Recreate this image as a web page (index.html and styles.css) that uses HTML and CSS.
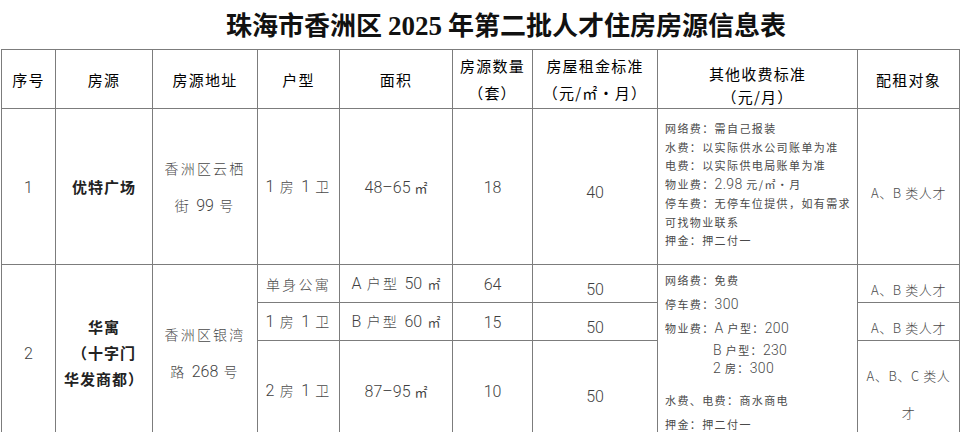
FILE: index.html
```html
<!DOCTYPE html>
<html lang="zh-CN">
<head>
<meta charset="utf-8">
<title>珠海市香洲区 2025 年第二批人才住房房源信息表</title>
<link rel="stylesheet" href="styles.css">
</head>
<body>
<div class="page">
  <h1 class="title">珠海市香洲区 <span class="num">2025</span> 年第二批人才住房房源信息表</h1>
  <table class="sheet">
    <colgroup>
      <col class="c1"><col class="c2"><col class="c3"><col class="c4"><col class="c5">
      <col class="c6"><col class="c7"><col class="c8"><col class="c9">
    </colgroup>
    <thead>
      <tr class="r-head">
        <th>序号</th>
        <th>房源</th>
        <th>房源地址</th>
        <th>户型</th>
        <th>面积</th>
        <th class="two">房源数量<br>（套）</th>
        <th class="two">房屋租金标准<br>（元/㎡・月）</th>
        <th class="two low-h">其他收费标准<br>（元/月）</th>
        <th>配租对象</th>
      </tr>
    </thead>
    <tbody>
      <tr class="r1">
        <td class="num">1</td>
        <td class="name">优特广场</td>
        <td class="addr">香洲区云栖<br>街 <span class="num">99</span> 号</td>
        <td><span class="num">1</span> 房 <span class="num">1</span> 卫</td>
        <td class="num">48–65 <span class="sq">㎡</span></td>
        <td class="num">18</td>
        <td class="num low">40</td>
        <td class="fees fees1">
          <div>网络费：需自己报装</div>
          <div>水费：以实际供水公司账单为准</div>
          <div>电费：以实际供电局账单为准</div>
          <div>物业费：<span class="fnum">2.98</span> 元/㎡・月</div>
          <div>停车费：无停车位提供，如有需求</div>
          <div>可找物业联系</div>
          <div>押金：押二付一</div>
        </td>
        <td class="target low">A、B 类人才</td>
      </tr>
      <tr class="r2a">
        <td class="num" rowspan="3">2</td>
        <td class="name name2" rowspan="3">华寓<br>（十字门<br>华发商都）</td>
        <td class="addr" rowspan="3">香洲区银湾<br>路 <span class="num">268</span> 号</td>
        <td>单身公寓</td>
        <td><span class="num">A</span> 户型 <span class="num">50</span> <span class="sq">㎡</span></td>
        <td class="num">64</td>
        <td class="num low">50</td>
        <td class="fees fees2" rowspan="3">
          <div class="fl">网络费：免费</div>
          <div class="fl">停车费：<span class="fnum">300</span></div>
          <div class="fl">物业费：<span class="fnum">A</span> 户型：<span class="fnum">200</span></div>
          <div class="fl ind l4"><span class="fnum">B</span> 户型：<span class="fnum">230</span></div>
          <div class="fl ind l5"><span class="fnum">2</span> 房：<span class="fnum">300</span></div>
          <div class="fl l6">水费、电费：商水商电</div>
          <div class="fl">押金：押二付一</div>
        </td>
        <td class="target low">A、B 类人才</td>
      </tr>
      <tr class="r2b">
        <td><span class="num">1</span> 房 <span class="num">1</span> 卫</td>
        <td><span class="num">B</span> 户型 <span class="num">60</span> <span class="sq">㎡</span></td>
        <td class="num">15</td>
        <td class="num low">50</td>
        <td class="target low">A、B 类人才</td>
      </tr>
      <tr class="r2c">
        <td><span class="num">2</span> 房 <span class="num">1</span> 卫</td>
        <td class="num">87–95 <span class="sq">㎡</span></td>
        <td class="num">10</td>
        <td class="num low">50</td>
        <td class="target target3">A、B、C 类人<br>才</td>
      </tr>
    </tbody>
  </table>
</div>
</body>
</html>
```
FILE: styles.css
```css
html, body {
  margin: 0;
  padding: 0;
  background: #ffffff;
  overflow: hidden;
}

.page {
  width: 960px;
  font-family: "Noto Sans CJK SC", sans-serif;
}

.title {
  margin: 0;
  height: 49px;
  line-height: 48px;
  padding-left: 52px;
  text-align: center;
  font-size: 26px;
  font-weight: 700;
  color: #111;
  font-family: "Noto Sans CJK SC", sans-serif;
  white-space: nowrap;
}

.title .num {
  font-family: "Liberation Serif", serif;
  font-size: 27px;
  font-weight: 700;
}

.sheet {
  margin-left: 1px;
  width: 958px;
  border-collapse: collapse;
  table-layout: fixed;
}

.c1 { width: 54px; }
.c2 { width: 97px; }
.c3 { width: 105px; }
.c4 { width: 82px; }
.c5 { width: 113px; }
.c6 { width: 80px; }
.c7 { width: 125px; }
.c8 { width: 200px; }
.c9 { width: 102px; }

.sheet th,
.sheet td {
  border: 1px solid #7c7c7c;
  padding: 0;
  text-align: center;
  vertical-align: middle;
  white-space: nowrap;
  overflow: hidden;
}

.sheet th {
  font-size: 15px;
  font-weight: 400;
  color: #000;
  letter-spacing: 1.2px;
  line-height: 27px;
}

.sheet th.low-h {
  padding-top: 12px;
  line-height: 23px;
}

.sheet td {
  font-size: 14px;
  font-weight: 300;
  color: #4a4a4a;
  letter-spacing: 2.2px;
  line-height: 20px;
}

.r-head { height: 59px; }
.r1 { height: 156px; }
.r2a { height: 38px; }
.r2b { height: 38px; }
.r2c { height: 100px; }

.sheet td.num,
.sheet .num {
  font-family: Roboto, "Noto Sans CJK SC", sans-serif;
  font-size: 16px;
  font-weight: 300;
  letter-spacing: 0;
  color: #3f3f3f;
}

.sheet td.num {
  padding-top: 3px;
}

.sheet .sq {
  font-size: 13px;
  font-weight: 400;
  letter-spacing: 0;
}

.sheet td.low {
  padding-top: 12px;
}

.sheet td.target {
  font-size: 13px;
  letter-spacing: 0.6px;
}

.sheet td.name {
  font-weight: 700;
  font-size: 15px;
  color: #222;
  letter-spacing: 1px;
}

.sheet td.name2 {
  line-height: 26px;
  padding-top: 0;
}

.sheet td.addr {
  line-height: 37px;
}

.sheet td.target3 {
  line-height: 37px;
  padding-top: 6px;
}

.sheet td.fees {
  text-align: left;
  vertical-align: top;
  padding-left: 7px;
  font-size: 11px;
  letter-spacing: 1.4px;
  color: #4a4a4a;
  font-weight: 400;
}

.sheet td.fees1 {
  padding-top: 10px;
  line-height: 18.7px;
}

.sheet td.fees2 {
  padding-top: 3px;
}

.fees2 .fl {
  line-height: 24px;
}

.fees2 .l4 {
  line-height: 20px;
}

.fees2 .l5 {
  line-height: 16px;
}

.fees2 .l6 {
  margin-top: 12px;
}

.fees .ind {
  padding-left: 48px;
}

.fees .fnum {
  font-family: Roboto, "Noto Sans CJK SC", sans-serif;
  font-size: 14px;
  font-weight: 300;
  letter-spacing: 0.3px;
}
```
